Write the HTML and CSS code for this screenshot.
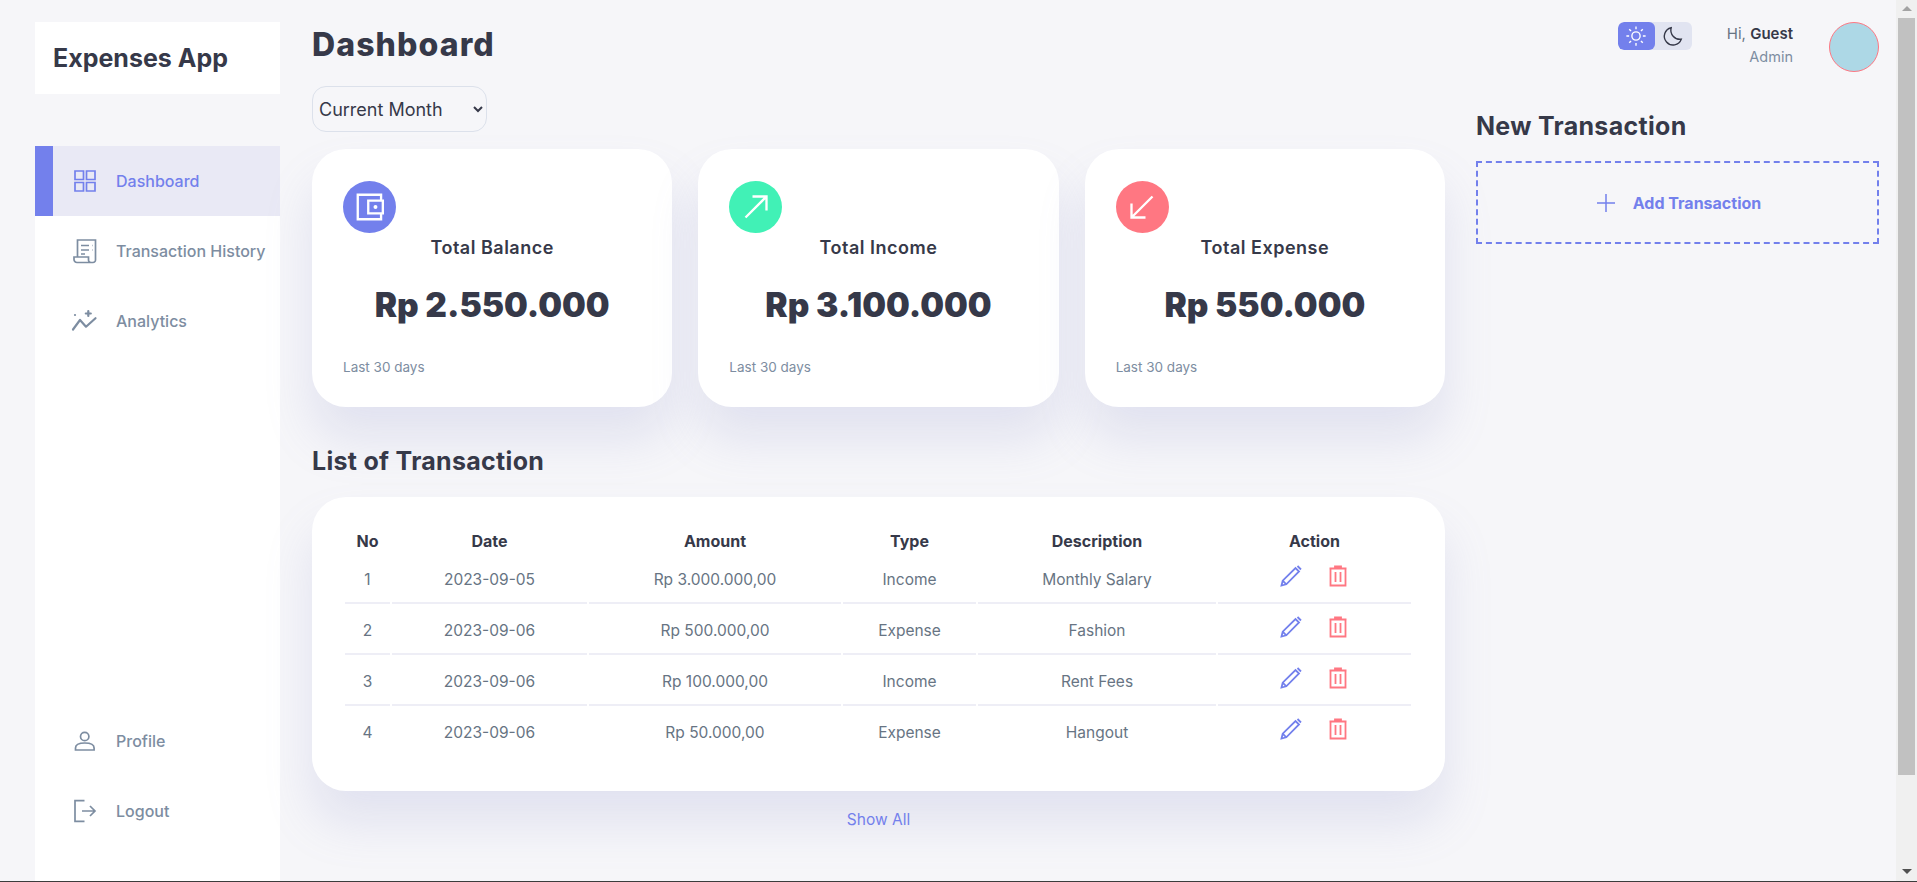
FILE: index.html
```html
<!DOCTYPE html>
<html lang="en">
<head>
    <meta charset="UTF-8">
    <meta name="viewport" content="width=device-width, initial-scale=1.0">
    <title>Expenses App</title>
    <link rel="stylesheet" href="styles.css">
</head>
<body>
    <div class="container">
        <!-- sidebar -->
        <aside class="sidebar">
            <div class="logo">Expenses App</div>
            <nav class="side-nav">
                <a class="nav-item active">
                    <svg viewBox="0 0 24 24"><path d="M2 2h8.5v8.5H2zM13.5 2H22v8.5h-8.5zM2 13.5h8.5V22H2zM13.5 13.5H22V22h-8.5z"/></svg>
                    <span>Dashboard</span>
                </a>
                <a class="nav-item">
                    <svg viewBox="0 0 24 24"><path d="M4.5 18V1h18v20a2.5 2.5 0 0 1-2.5 2.5H4a3 3 0 0 1-3-3V18h14.5v3a2.5 2.5 0 0 0 2.5 2.5M8 6.5h8M8 11h8M8 15h4M19 6.5h.5M19 11h.5"/></svg>
                    <span>Transaction History</span>
                </a>
                <a class="nav-item">
                    <svg class="thick" viewBox="0 0 24 24"><path d="M0 20.5 7 11l6 6.7 9.5-8.5M2 6h.01M15.3 2v5M12.8 4.5h5"/></svg>
                    <span>Analytics</span>
                </a>
                <a class="nav-item nav-bottom">
                    <svg viewBox="0 0 24 24"><circle cx="11.7" cy="7.5" r="4.2"/><path d="M2.5 21v-2c0-3.500 4-5 9.300-5s9.300 1.500 9.300 5v2z"/></svg>
                    <span>Profile</span>
                </a>
                <a class="nav-item">
                    <svg viewBox="0 0 24 24"><path d="M11.5 1.7H2v20.6h9.5M9 12h13M17 7l5 5-5 5"/></svg>
                    <span>Logout</span>
                </a>
            </nav>
        </aside>

        <!-- main -->
        <main class="main">
            <h1>Dashboard</h1>
            <select class="period">
                <option>Current Month</option>
            </select>

            <div class="cards">
                <div class="card">
                    <div class="card-icon balance">
                        <svg viewBox="0 0 24 24"><path d="M21.5 6V1.5h-20v21h20V18M23 6.5H10.5v11H23z"/><circle cx="16.7" cy="12" r="1.7" class="dot"/></svg>
                    </div>
                    <h3>Total Balance</h3>
                    <div class="amount">Rp 2.550.000</div>
                    <small>Last 30 days</small>
                </div>
                <div class="card">
                    <div class="card-icon income">
                        <svg viewBox="0 0 24 24"><path d="M3 21 21 3M9 3h12v12"/></svg>
                    </div>
                    <h3>Total Income</h3>
                    <div class="amount">Rp 3.100.000</div>
                    <small>Last 30 days</small>
                </div>
                <div class="card">
                    <div class="card-icon expense">
                        <svg viewBox="0 0 24 24"><path d="M21 3 3 21M3 9v12h12"/></svg>
                    </div>
                    <h3>Total Expense</h3>
                    <div class="amount">Rp 550.000</div>
                    <small>Last 30 days</small>
                </div>
            </div>

            <h2 class="list-title">List of Transaction</h2>
            <div class="table-card">
                <table>
                    <thead>
                        <tr><th>No</th><th>Date</th><th>Amount</th><th>Type</th><th>Description</th><th>Action</th></tr>
                    </thead>
                    <tbody>
                        <tr>
                            <td>1</td><td>2023-09-05</td><td>Rp 3.000.000,00</td><td>Income</td><td>Monthly Salary</td>
                            <td class="actions">
                                <svg class="edit" viewBox="0 0 24 24"><path d="M2.5 21.5l1.2-4.800L16.500 4 20 7.500 7.300 20.300zM3.700 16.700l3.600 3.600M18.500 2 22 5.500"/></svg>
                                <svg class="trash" viewBox="0 0 24 24"><path d="M3.5 4.500h17M9 4.500v-2h6v2M4.500 4.500v17h15v-17M9.500 8v10M14.500 8v10"/></svg>
                            </td>
                        </tr>
                        <tr>
                            <td>2</td><td>2023-09-06</td><td>Rp 500.000,00</td><td>Expense</td><td>Fashion</td>
                            <td class="actions">
                                <svg class="edit" viewBox="0 0 24 24"><path d="M2.5 21.5l1.2-4.800L16.500 4 20 7.500 7.300 20.300zM3.700 16.700l3.600 3.600M18.500 2 22 5.500"/></svg>
                                <svg class="trash" viewBox="0 0 24 24"><path d="M3.5 4.500h17M9 4.500v-2h6v2M4.500 4.500v17h15v-17M9.500 8v10M14.500 8v10"/></svg>
                            </td>
                        </tr>
                        <tr>
                            <td>3</td><td>2023-09-06</td><td>Rp 100.000,00</td><td>Income</td><td>Rent Fees</td>
                            <td class="actions">
                                <svg class="edit" viewBox="0 0 24 24"><path d="M2.5 21.5l1.2-4.800L16.500 4 20 7.500 7.300 20.300zM3.700 16.700l3.600 3.600M18.500 2 22 5.500"/></svg>
                                <svg class="trash" viewBox="0 0 24 24"><path d="M3.5 4.500h17M9 4.500v-2h6v2M4.500 4.500v17h15v-17M9.500 8v10M14.500 8v10"/></svg>
                            </td>
                        </tr>
                        <tr>
                            <td>4</td><td>2023-09-06</td><td>Rp 50.000,00</td><td>Expense</td><td>Hangout</td>
                            <td class="actions">
                                <svg class="edit" viewBox="0 0 24 24"><path d="M2.5 21.5l1.2-4.800L16.500 4 20 7.500 7.300 20.300zM3.700 16.700l3.600 3.600M18.500 2 22 5.500"/></svg>
                                <svg class="trash" viewBox="0 0 24 24"><path d="M3.5 4.500h17M9 4.500v-2h6v2M4.500 4.500v17h15v-17M9.500 8v10M14.500 8v10"/></svg>
                            </td>
                        </tr>
                    </tbody>
                </table>
            </div>
            <a class="show-all">Show All</a>
        </main>

        <!-- right column -->
        <section class="right">
            <div class="top-bar">
                <div class="theme-toggle">
                    <span class="toggle-btn on">
                        <svg viewBox="0 0 24 24"><circle cx="12" cy="12" r="4.5"/><path d="M12 1.5v3M12 19.500v3M1.500 12h3M19.500 12h3M4.600 4.600l2 2M17.400 17.400l2 2M4.600 19.400l2-2M17.400 6.600l2-2"/></svg>
                    </span>
                    <span class="toggle-btn">
                        <svg viewBox="0 0 24 24"><path d="M10 3a9.500 9.500 0 1 0 11 12.500A10 10 0 0 1 10 3z"/></svg>
                    </span>
                </div>
                <div class="user-info">
                    <p>Hi, <b>Guest</b></p>
                    <small>Admin</small>
                </div>
                <div class="avatar"></div>
            </div>
            <h2 class="new-title">New Transaction</h2>
            <div class="add-box">
                <svg viewBox="0 0 24 24"><path d="M12 3v18M3 12h18"/></svg>
                <span>Add Transaction</span>
            </div>
        </section>
    </div>

    <!-- browser chrome visible in the capture -->
    <div class="scrollbar">
        <span class="arrow-up"></span>
        <span class="thumb"></span>
        <span class="arrow-down"></span>
    </div>
    <div class="window-edge"></div>
</body>
</html>
```

FILE: styles.css
```css
* {
    margin: 0;
    padding: 0;
    box-sizing: border-box;
}

body {
    background: #f6f6f9;
    color: #363949;
    font-family: Inter, "Noto Sans", sans-serif;
    font-size: 14px;
}

svg {
    fill: none;
    stroke: currentColor;
    stroke-width: 1.5;
}

.container {
    display: grid;
    grid-template-columns: 277px 1164px 403px;
    height: 100vh;
    padding: 22px 17px 0 35px;
}

/* sidebar */
.sidebar {
    display: flex;
    flex-direction: column;
    padding-right: 32px;
}

.logo {
    height: 72px;
    padding-left: 18px;
    background: #fff;
    color: #363949;
    font-size: 25px;
    font-weight: 700;
    line-height: 72px;
}

.side-nav {
    display: flex;
    flex-direction: column;
    flex: 1;
    margin-top: 52px;
    padding-bottom: 36px;
    background: #fff;
}

.nav-item {
    display: flex;
    align-items: center;
    gap: 19px;
    height: 70px;
    padding-left: 38px;
    color: #7d8da1;
    font-size: 16px;
    font-weight: 500;
}

.nav-item svg {
    width: 24px;
    height: 24px;
    stroke-width: 1.7;
    overflow: visible;
}

.nav-item svg.thick {
    stroke-width: 2.2;
    stroke-linecap: round;
    stroke-linejoin: round;
}

.nav-item.active {
    padding-left: 20px;
    border-left: 18px solid #7380ec;
    background: #e9e9f5;
    color: #7380ec;
}

.nav-bottom {
    margin-top: auto;
}

/* main */
.main {
    padding-right: 31px;
}

h1 {
    font-size: 32px;
    font-weight: 800;
    letter-spacing: 1.1px;
    line-height: 46px;
}

.period {
    display: block;
    width: 175px;
    height: 46px;
    margin-top: 18px;
    padding: 0 3px 0 2px;
    background: #f6f6f9;
    border: 1px solid #dce1eb;
    border-radius: 14px;
    color: #363949;
    font-family: inherit;
    font-size: 18px;
}

.cards {
    display: grid;
    grid-template-columns: repeat(3, 1fr);
    column-gap: 26px;
    margin-top: 17px;
}

.card {
    display: flex;
    flex-direction: column;
    height: 258px;
    padding: 32px 31px;
    background: #fff;
    border-radius: 34px;
    box-shadow: 0 32px 48px rgba(132, 139, 200, 0.18);
}

.card-icon {
    display: flex;
    align-items: center;
    justify-content: center;
    width: 53px;
    height: 52px;
    border-radius: 50%;
    color: #fff;
}

.card-icon svg {
    width: 28px;
    height: 28px;
    stroke-width: 2;
}

.card-icon .dot {
    fill: #fff;
    stroke: none;
}

.balance { background: #7380ec; }
.income { background: #41f1b6; }
.expense { background: #ff7782; }

.card h3 {
    margin-top: 2px;
    font-size: 18px;
    font-weight: 600;
    letter-spacing: 0.5px;
    line-height: 26px;
    text-align: center;
}

.amount {
    margin-top: 18px;
    font-size: 33.5px;
    font-weight: 900;
    line-height: 52px;
    text-align: center;
}

.card small {
    margin-top: 28px;
    color: #7d8da1;
    font-size: 13.5px;
}

.list-title {
    margin-top: 36px;
    font-size: 25px;
    font-weight: 700;
    letter-spacing: 0.3px;
    line-height: 36px;
}

.table-card {
    height: 294px;
    margin-top: 18px;
    padding: 36px 32px 0 31px;
    background: #fff;
    border-radius: 34px;
    box-shadow: 0 32px 48px rgba(132, 139, 200, 0.18);
}

table {
    width: 100%;
    border-spacing: 2px 0;
    table-layout: fixed;
}

th {
    height: 20px;
    padding-bottom: 4px;
    font-size: 16px;
    font-weight: 700;
    line-height: 16px;
    text-align: center;
}

td {
    height: 51px;
    padding-top: 3px;
    border-bottom: 2px solid #eeeef6;
    color: #677483;
    font-size: 15.5px;
    text-align: center;
}

tbody tr:last-child td {
    border-bottom-color: transparent;
}

th:nth-child(1) { width: 45px; }
th:nth-child(2) { width: 195px; }
th:nth-child(3) { width: 252px; }
th:nth-child(4) { width: 133px; }
th:nth-child(5) { width: 238px; }

.actions svg {
    width: 24px;
    height: 24px;
    margin-bottom: 6px;
    stroke-width: 1.8;
    vertical-align: middle;
}

.edit { color: #7380ec; }

.trash {
    margin-left: 19px;
    color: #ff7782;
}

.show-all {
    display: block;
    margin-top: 19px;
    color: #7380ec;
    font-size: 15.5px;
    text-align: center;
}

/* right column */
.top-bar {
    display: flex;
    align-items: flex-start;
    justify-content: flex-end;
}

.theme-toggle {
    display: flex;
    height: 28px;
    border-radius: 6px;
    background: #e1e4f1;
    overflow: hidden;
}

.toggle-btn {
    display: flex;
    align-items: center;
    justify-content: center;
    width: 37px;
}

.toggle-btn svg {
    width: 22px;
    height: 22px;
}

.toggle-btn.on {
    border-radius: 6px;
    background: #7380ec;
    color: #fff;
}

.user-info {
    margin-left: 35px;
    text-align: right;
}

.user-info p {
    color: #677483;
    font-size: 15px;
    line-height: 24px;
}

.user-info b {
    color: #363949;
    font-weight: 600;
}

.user-info small {
    display: block;
    margin-top: 2px;
    color: #7d8da1;
    font-size: 14.5px;
}

.avatar {
    width: 50px;
    height: 50px;
    margin-left: 36px;
    border: 1px solid #ff7782;
    border-radius: 50%;
    background: lightblue;
}

.new-title {
    margin-top: 36px;
    font-size: 25px;
    font-weight: 700;
    letter-spacing: 0.3px;
    line-height: 36px;
}

.add-box {
    display: flex;
    align-items: center;
    justify-content: center;
    gap: 15px;
    height: 83px;
    margin-top: 17px;
    border: 2px dashed #7380ec;
    color: #7380ec;
    font-size: 16px;
    font-weight: 700;
}

.add-box svg {
    width: 24px;
    height: 24px;
}

/* scrollbar and bottom edge of the captured window */
.scrollbar {
    position: fixed;
    top: 0;
    right: 0;
    bottom: 1px;
    display: flex;
    flex-direction: column;
    align-items: center;
    width: 21px;
    background: #f0f0f0;
}

.arrow-up,
.arrow-down {
    width: 0;
    height: 0;
    border-left: 5px solid transparent;
    border-right: 5px solid transparent;
}

.arrow-up {
    margin: 6px 0 7px;
    border-bottom: 5px solid #a3a3a3;
}

.thumb {
    width: 17px;
    height: 757px;
    background: #c1c1c1;
}

.arrow-down {
    margin-top: auto;
    margin-bottom: 7px;
    border-top: 5px solid #505050;
}

.window-edge {
    position: fixed;
    left: 0;
    right: 0;
    bottom: 0;
    height: 1px;
    background: #3c3c3c;
}
```
